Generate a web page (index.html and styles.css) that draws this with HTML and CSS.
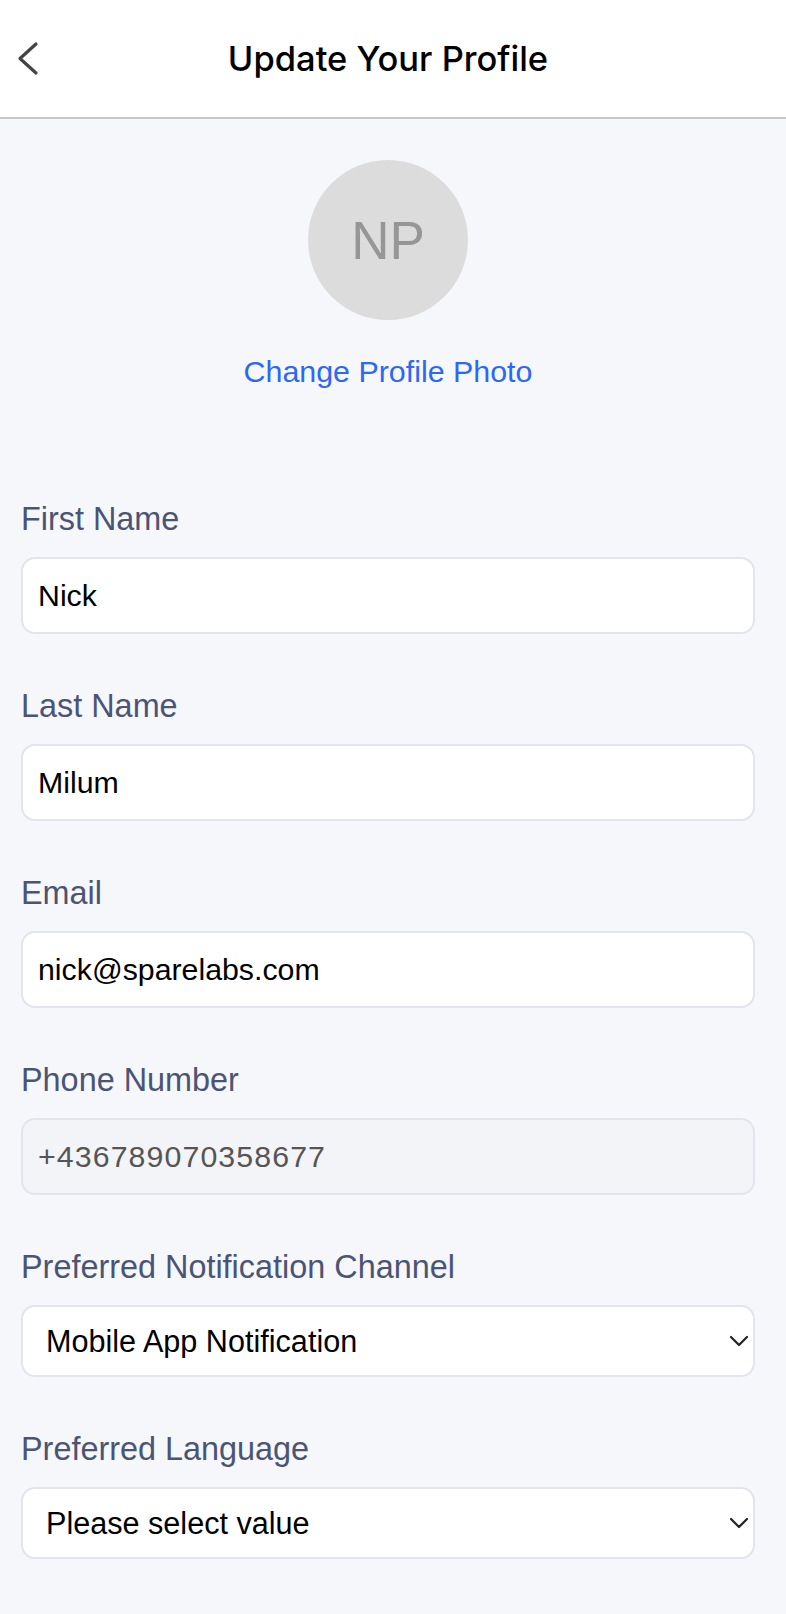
FILE: index.html
```html
<!DOCTYPE html>
<html lang="en">
<head>
<meta charset="utf-8">
<title>Update Your Profile</title>
<link rel="stylesheet" href="styles.css">
</head>
<body>
<header class="topbar">
  <button class="back" type="button" aria-label="Back">
    <svg width="22" height="36" viewBox="0 0 22 36"><path d="M19 3 L3 17.5 L19 32" fill="none" stroke="#444" stroke-width="3.2" stroke-linecap="round" stroke-linejoin="round"/></svg>
  </button>
  <h1 class="title">Update Your Profile</h1>
  <span></span>
</header>
<main class="content">
  <section class="photo">
    <div class="avatar">NP</div>
    <a class="change-photo" href="#">Change Profile Photo</a>
  </section>
  <form class="form">
    <div class="field">
      <label class="label">First Name</label>
      <input class="input" type="text" value="Nick">
    </div>
    <div class="field">
      <label class="label">Last Name</label>
      <input class="input" type="text" value="Milum">
    </div>
    <div class="field">
      <label class="label">Email</label>
      <input class="input" type="text" value="nick@sparelabs.com">
    </div>
    <div class="field">
      <label class="label">Phone Number</label>
      <input class="input input-disabled" type="text" value="+436789070358677" disabled>
    </div>
    <div class="field">
      <label class="label">Preferred Notification Channel</label>
      <div class="select-wrap">
        <select class="select"><option>Mobile App Notification</option></select>
        <svg class="caret" width="20" height="12" viewBox="0 0 20 12"><path d="M2 2 L10 10 L18 2" fill="none" stroke="#222" stroke-width="2.2" stroke-linecap="round" stroke-linejoin="round"/></svg>
      </div>
    </div>
    <div class="field">
      <label class="label">Preferred Language</label>
      <div class="select-wrap">
        <select class="select"><option>Please select value</option></select>
        <svg class="caret" width="20" height="12" viewBox="0 0 20 12"><path d="M2 2 L10 10 L18 2" fill="none" stroke="#222" stroke-width="2.2" stroke-linecap="round" stroke-linejoin="round"/></svg>
      </div>
    </div>
  </form>
</main>
</body>
</html>
```
FILE: styles.css
```css
* { box-sizing: border-box; }
html, body {
  margin: 0;
  padding: 0;
  background: #f6f7fb;
  font-family: "Liberation Sans", Arial, sans-serif;
  min-height: 100%;
}
.topbar {
  display: grid;
  grid-template-columns: 60px 1fr 60px;
  align-items: center;
  height: 119px;
  padding-right: 10px;
  background: #fff;
  border-bottom: 2px solid #c6c6c6;
}
.back {
  display: flex;
  align-items: center;
  border: 0;
  background: none;
  padding: 0 0 0 17px;
  height: 40px;
  cursor: pointer;
}
.title {
  margin: 0;
  text-align: center;
  font-family: Inter, "Liberation Sans", sans-serif;
  font-size: 34.5px;
  font-weight: 500;
  color: #000;
  line-height: 40px;
}
.content {
  padding: 41px 31px 40px 21px;
}
.photo {
  display: flex;
  flex-direction: column;
  align-items: center;
}
.avatar {
  width: 160px;
  height: 160px;
  border-radius: 50%;
  background: #dcdcdc;
  color: #969696;
  font-size: 53px;
  display: flex;
  align-items: center;
  justify-content: center;
}
.change-photo {
  margin-top: 33px;
  font-size: 30.4px;
  line-height: 36px;
  color: #2c67f6;
  text-decoration: none;
}
.form {
  margin-top: 111px;
}
.field {
  margin-bottom: 53px;
}
.label {
  display: block;
  font-size: 32.4px;
  line-height: 38px;
  color: #4b5474;
  margin-bottom: 19px;
}
.input {
  display: block;
  width: 100%;
  height: 77px;
  padding: 0 15px;
  border: 2px solid #e3e5ee;
  border-radius: 14px;
  background: #fff;
  font-family: "Liberation Sans", Arial, sans-serif;
  font-size: 30.3px;
  color: #000;
  outline: none;
}
.input-disabled {
  background: #f3f4f8;
  color: #555;
  -webkit-text-fill-color: #555;
  opacity: 1;
  letter-spacing: 1.1px;
}
.select-wrap {
  position: relative;
}
.select {
  display: block;
  width: 100%;
  height: 72px;
  padding: 0 40px 0 23px;
  border: 2px solid #e3e5ee;
  border-radius: 14px;
  background: #fff;
  font-family: "Liberation Sans", Arial, sans-serif;
  font-size: 30.6px;
  color: #000;
  -webkit-appearance: none;
  appearance: none;
  outline: none;
}
.caret {
  position: absolute;
  right: 6px;
  top: 30px;
  pointer-events: none;
}
```
